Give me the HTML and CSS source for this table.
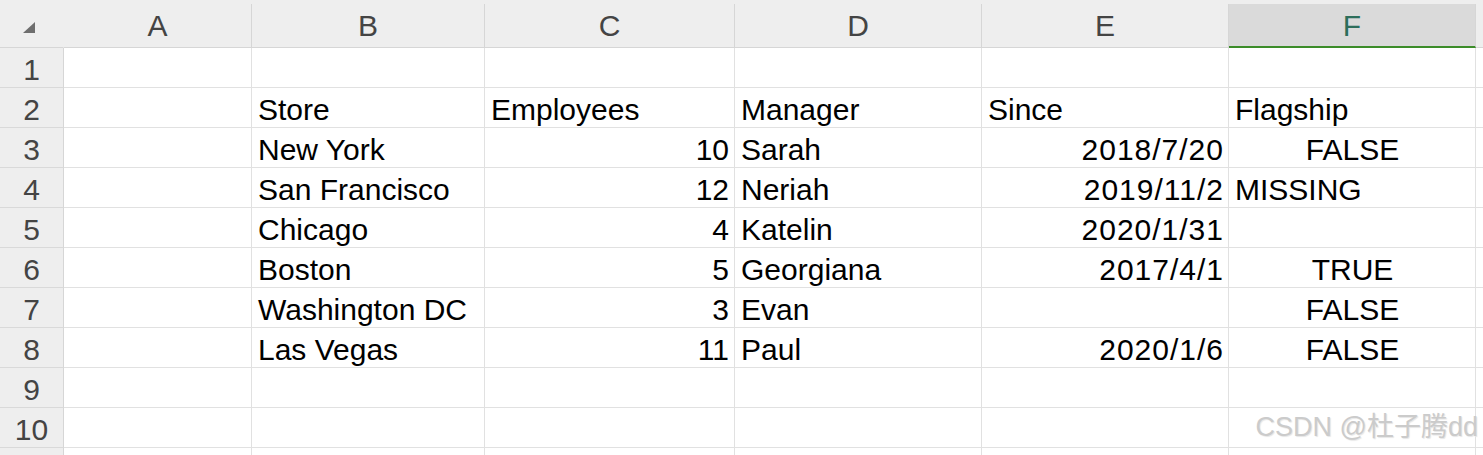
FILE: index.html
```html
<!DOCTYPE html>
<html>
<head>
<meta charset="utf-8">
<link rel="stylesheet" href="styles.css">
</head>
<body>
<div class="sheet">
  <div class="strip"></div>
  <div class="grid">
    <div class="ch corner"><span class="tri"></span></div>
    <div class="ch">A</div>
    <div class="ch">B</div>
    <div class="ch">C</div>
    <div class="ch">D</div>
    <div class="ch">E</div>
    <div class="ch sel">F</div>
    <div class="ch"></div>

    <div class="rh">1</div><div class="c"></div><div class="c"></div><div class="c"></div><div class="c"></div><div class="c"></div><div class="c"></div><div class="c"></div>

    <div class="rh">2</div><div class="c"></div><div class="c">Store</div><div class="c">Employees</div><div class="c">Manager</div><div class="c">Since</div><div class="c">Flagship</div><div class="c"></div>

    <div class="rh">3</div><div class="c"></div><div class="c">New York</div><div class="c r">10</div><div class="c">Sarah</div><div class="c r d">2018/7/20</div><div class="c m">FALSE</div><div class="c"></div>

    <div class="rh">4</div><div class="c"></div><div class="c">San Francisco</div><div class="c r">12</div><div class="c">Neriah</div><div class="c r d">2019/11/2</div><div class="c">MISSING</div><div class="c"></div>

    <div class="rh">5</div><div class="c"></div><div class="c">Chicago</div><div class="c r">4</div><div class="c">Katelin</div><div class="c r d">2020/1/31</div><div class="c"></div><div class="c"></div>

    <div class="rh">6</div><div class="c"></div><div class="c">Boston</div><div class="c r">5</div><div class="c">Georgiana</div><div class="c r d">2017/4/1</div><div class="c m">TRUE</div><div class="c"></div>

    <div class="rh">7</div><div class="c"></div><div class="c">Washington DC</div><div class="c r">3</div><div class="c">Evan</div><div class="c r"></div><div class="c m">FALSE</div><div class="c"></div>

    <div class="rh">8</div><div class="c"></div><div class="c">Las Vegas</div><div class="c r">11</div><div class="c">Paul</div><div class="c r d">2020/1/6</div><div class="c m">FALSE</div><div class="c"></div>

    <div class="rh">9</div><div class="c"></div><div class="c"></div><div class="c"></div><div class="c"></div><div class="c"></div><div class="c"></div><div class="c"></div>

    <div class="rh">10</div><div class="c"></div><div class="c"></div><div class="c"></div><div class="c"></div><div class="c"></div><div class="c"></div><div class="c"></div>

    <div class="rh"></div><div class="c"></div><div class="c"></div><div class="c"></div><div class="c"></div><div class="c"></div><div class="c"></div><div class="c"></div>
  </div>
  <div class="watermark">CSDN @杜子腾dd</div>
</div>
</body>
</html>
```

FILE: styles.css
```css
* { box-sizing: border-box; }
html, body { margin: 0; padding: 0; background: #fff; overflow: hidden; }
body {
  font-family: "Liberation Sans", Arial, sans-serif;
  width: 1483px;
  height: 455px;
}
.sheet { position: relative; width: 1483px; height: 455px; overflow: hidden; }
.strip { height: 4px; background: #eeeeee; }
.grid {
  display: grid;
  grid-template-columns: 64px 188px 233px 250px 247px 247px 247px 1fr;
  grid-template-rows: 44px repeat(11, 40px);
}
.ch {
  background: #eeeeee;
  border-right: 1px solid #d6d6d6;
  border-bottom: 1px solid #d6d6d6;
  color: #444;
  font-size: 30px;
  text-align: center;
  line-height: 44px;
}
.ch.corner { position: relative; border-right-color: #eeeeee; }
.tri {
  position: absolute;
  left: 23px;
  top: 18px;
  width: 0; height: 0;
  border-left: 12px solid transparent;
  border-bottom: 11px solid #6e6e6e;
}
.ch.sel {
  background: #dadada;
  color: #2d6e5b;
  border-bottom: 2px solid #3c8c29;
  line-height: 43px;
}
.rh {
  background: #eeeeee;
  border-right: 1px solid #d6d6d6;
  border-bottom: 1px solid #d9d9d9;
  color: #444;
  font-size: 30px;
  text-align: center;
  line-height: 40px;
  padding-top: 2px;
}
.c {
  border-right: 1px solid #e1e1e1;
  border-bottom: 1px solid #e1e1e1;
  color: #000;
  font-size: 30px;
  line-height: 40px;
  padding: 2px 5px 0 6px;
  white-space: nowrap;
}
.c.r { text-align: right; }
.c.d { letter-spacing: 1px; padding-right: 4px; }
.c.m { text-align: center; }
.watermark {
  position: absolute;
  right: 5px;
  bottom: 11px;
  font-family: "Liberation Sans", "Noto Sans CJK SC", sans-serif;
  font-size: 27px;
  color: #cbcbcb;
  text-shadow: 1px 1px 1px #e6e6e6;
  white-space: nowrap;
}
```
